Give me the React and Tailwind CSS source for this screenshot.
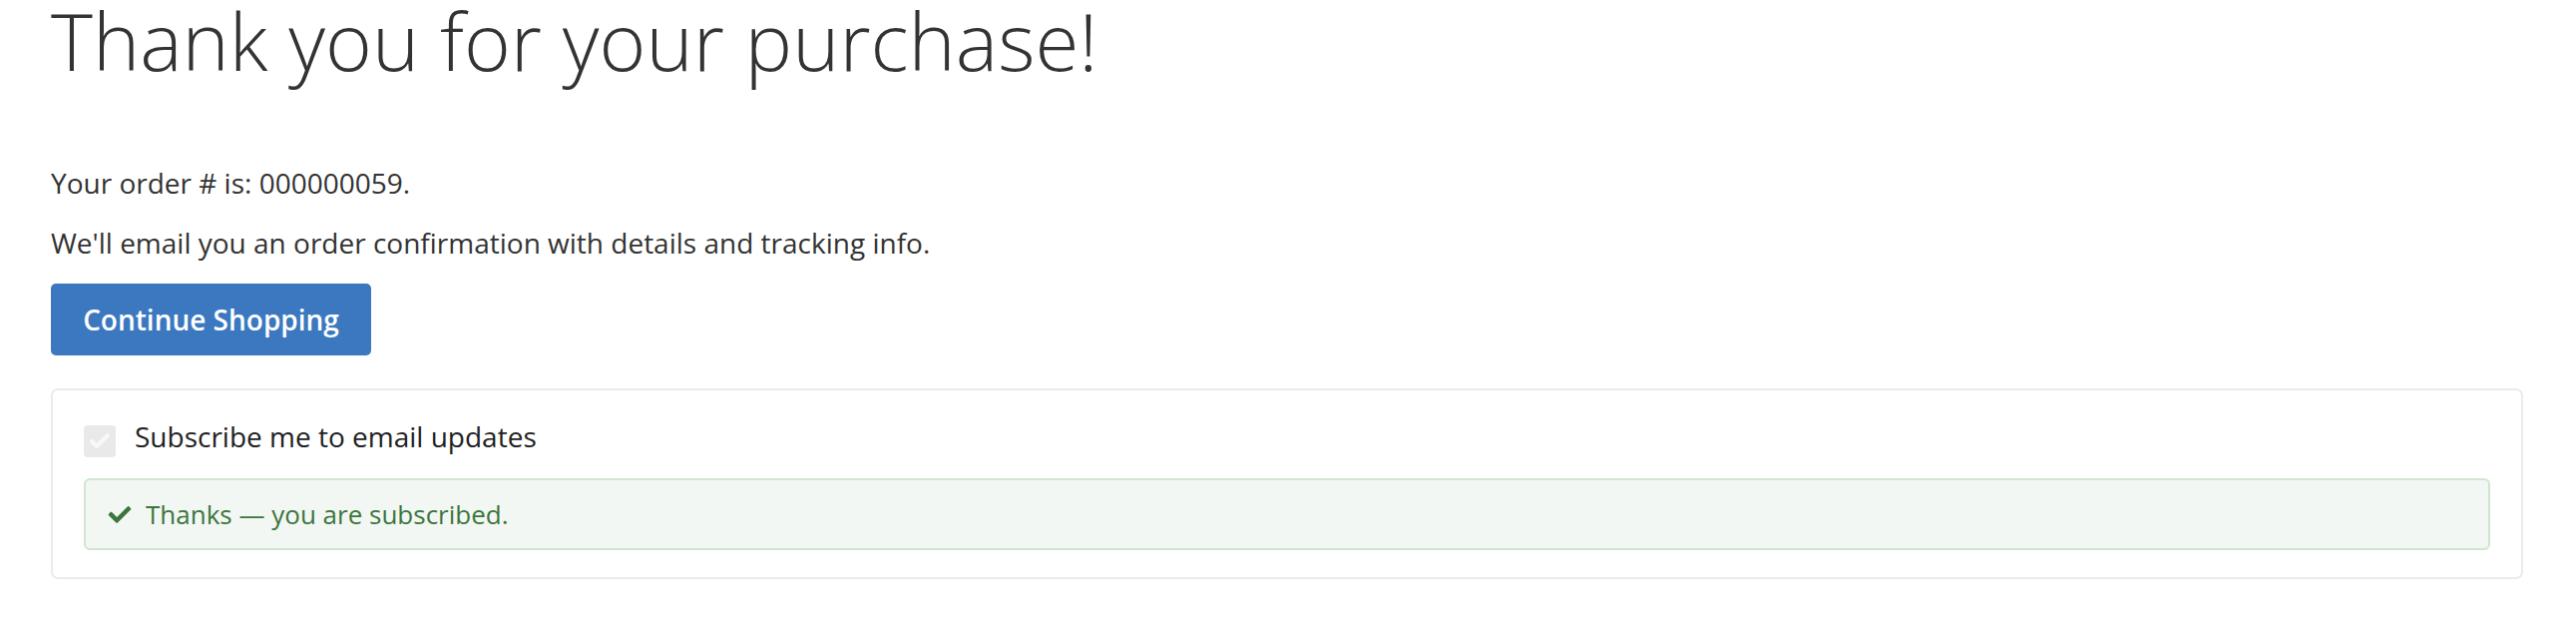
import { Check } from 'lucide-react'

function SuccessIcon() {
  return (
    <svg viewBox="0 64 512 384" className="h-[17px] w-[24px] shrink-0 fill-[#3c763d]">
      <path d="M173.898 439.404l-166.4-166.4c-9.997-9.997-9.997-26.206 0-36.204l36.203-36.204c9.997-9.998 26.207-9.998 36.204 0L192 312.69 432.095 72.596c9.997-9.997 26.207-9.997 36.204 0l36.203 36.204c9.997 9.997 9.997 26.206 0 36.204l-294.4 294.401c-9.998 9.997-26.207 9.997-36.204-.001z" />
    </svg>
  )
}

function App() {
  return (
    <main className="min-h-screen bg-white px-[51px] font-['Open_Sans',sans-serif] text-[#333]">
      <h1 className="text-[80px] font-light leading-none text-[#333]">Thank you for your purchase!</h1>

      <p className="mt-[83px] text-[28px] leading-[40px]">Your order # is: 000000059.</p>
      <p className="mt-[20px] text-[28px] leading-[40px]">
        We'll email you an order confirmation with details and tracking info.
      </p>

      <button
        type="button"
        className="mt-[21px] flex h-[72px] w-[321px] items-center justify-center rounded-[5px] bg-[#3b78c0] text-[28px] font-semibold text-white"
      >
        Continue Shopping
      </button>

      <section className="mt-[33px] w-[2478px] rounded-[7px] border-2 border-[#ebebe7] px-[31px] pt-[35px] pb-[27px]">
        <label className="flex items-start gap-[19px]">
          <span className="flex h-[32px] w-[32px] items-center justify-center rounded-[4px] bg-[#e9e9e9]">
            <Check className="h-[24px] w-[24px] text-[#f8f8f8]" strokeWidth={4} />
          </span>
          <span className="text-[28px] leading-[22px] text-[#222]">Subscribe me to email updates</span>
        </label>

        <div className="mt-[21px] flex h-[72px] items-center gap-[14px] rounded-[6px] border-2 border-[#d0e6cd] bg-[#f2f7f3] px-[22px]">
          <SuccessIcon />
          <span className="text-[26px] leading-none text-[#3c763d]">Thanks — you are subscribed.</span>
        </div>
      </section>
    </main>
  )
}

export default App
